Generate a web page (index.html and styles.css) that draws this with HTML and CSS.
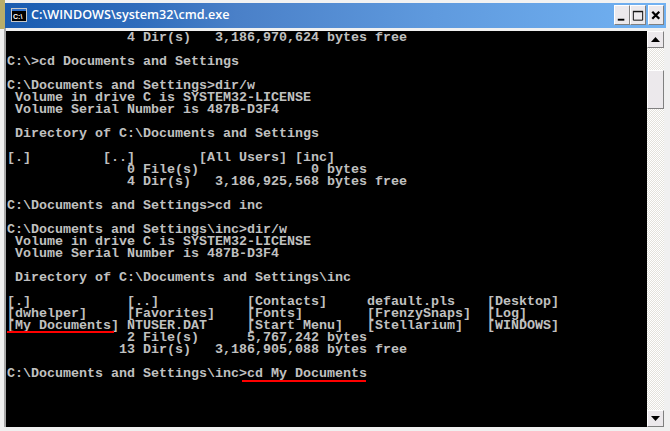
FILE: index.html
```html
<!DOCTYPE html>
<html lang="en">
<head>
<meta charset="utf-8">
<title>cmd.exe</title>
<link rel="stylesheet" href="styles.css">
</head>
<body>
<div class="window">
  <header class="titlebar">
    <svg class="app-icon" width="16" height="14" viewBox="0 0 16 14"><rect x="0.5" y="0.5" width="15" height="13" fill="#000" stroke="#c8c8c8"/><rect x="1" y="1" width="14" height="2" fill="#2f6fc8"/><text x="2" y="10.5" class="icon-text">C:\</text></svg>
    <span class="title">C:\WINDOWS\system32\cmd.exe</span>
    <div class="controls">
      <button class="ctl"><svg width="15" height="15" viewBox="0 0 15 15"><rect x="3" y="11" width="7" height="2" fill="#000"/></svg></button>
      <button class="ctl"><svg width="15" height="15" viewBox="0 0 15 15"><path d="M2.5 3.5h10v9h-10z M2 3h11" fill="none" stroke="#000"/></svg></button>
      <button class="ctl ctl-close"><svg width="15" height="15" viewBox="0 0 15 15"><path d="M3.5 3.5 L11 11 M11 3.5 L3.5 11" stroke="#000" stroke-width="2.4"/></svg></button>
    </div>
  </header>
  <div class="client">
    <main class="console">
<pre class="output">               4 Dir(s)   3,186,970,624 bytes free

C:\&gt;cd Documents and Settings

C:\Documents and Settings&gt;dir/w
 Volume in drive C is SYSTEM32-LICENSE
 Volume Serial Number is 487B-D3F4

 Directory of C:\Documents and Settings

[.]         [..]        [All Users] [inc]
               0 File(s)              0 bytes
               4 Dir(s)   3,186,925,568 bytes free

C:\Documents and Settings&gt;cd inc

C:\Documents and Settings\inc&gt;dir/w
 Volume in drive C is SYSTEM32-LICENSE
 Volume Serial Number is 487B-D3F4

 Directory of C:\Documents and Settings\inc

[.]            [..]           [Contacts]     default.pls    [Desktop]
[dwhelper]     [Favorites]    [Fonts]        [FrenzySnaps]  [Log]
[My Documents] NTUSER.DAT     [Start Menu]   [Stellarium]   [WINDOWS]
               2 File(s)      5,767,242 bytes
              13 Dir(s)   3,186,905,088 bytes free

C:\Documents and Settings\inc&gt;cd My Documents</pre>
      <div class="mark mark-folder"></div>
      <div class="mark mark-command"></div>
    </main>
    <aside class="scrollbar">
      <div class="sb-btn"><svg width="9" height="5" viewBox="0 0 9 5"><path d="M4.5 0 L9 5 H0 Z" fill="#000"/></svg></div>
      <div class="sb-track"><div class="sb-thumb"></div></div>
      <div class="sb-btn"><svg width="9" height="5" viewBox="0 0 9 5"><path d="M4.5 5 L9 0 H0 Z" fill="#000"/></svg></div>
    </aside>
  </div>
</div>
</body>
</html>
```
FILE: styles.css
```css
* { box-sizing: border-box; }
html, body { margin: 0; padding: 0; }
body { width: 670px; height: 431px; overflow: hidden; background: linear-gradient(#b8ad6a 0 29px, #f0f0f0 29px); }
.window { width: 670px; height: 431px; display: flex; flex-direction: column; padding-top: 3px; }
.titlebar {
  height: 25px; flex: none; display: flex; align-items: center;
  margin: 0 4px 0 5px; padding: 2px 2px 3px 6px;
  background: linear-gradient(90deg, #1a5cb0 0%, #2f6cbc 20%, #4a80c8 35%, #5f9ade 65%, #72b2f2 100%);
  box-shadow: 0 -3px 0 #f2f2f2, 4px -3px 0 #f2f2f2, 4px 0 0 #f2f2f2;
}
.app-icon { flex: none; margin-right: 4px; }
.icon-text { font: bold 7px "Liberation Sans", sans-serif; fill: #fff; }
.title { font: 600 12.6px/1 "Open Sans", "Liberation Sans", sans-serif; color: #fff; white-space: nowrap; }
.controls { margin-left: auto; display: flex; }
.ctl { width: 16px; height: 20px; padding: 0; border: 1px solid; border-color: #fff #808080 #808080 #fff; background: #ece9ec; display: flex; align-items: center; justify-content: center; }
.ctl-close { margin-left: 2px; }
.client { flex: 1; min-height: 0; display: flex; margin: 0 0 4px 4px; padding: 3px 6px 0 0; border-left: 2px solid #a8a8a8; background: #f0f0f0; border-bottom: 0; }
.console { position: relative; width: 641px; background: #000; overflow: hidden; padding: 1px 0 0 1px; }
.output { margin: 0; font: 700 13.333px/12px "Liberation Mono", monospace; color: #c0c0c0; white-space: pre; }
.mark { position: absolute; height: 2px; background: #f00; }
.mark-folder { left: 1px; top: 300px; width: 107px; }
.mark-command { left: 236px; top: 349px; width: 124px; }
.scrollbar { width: 17px; display: flex; flex-direction: column; }
.sb-btn { height: 17px; flex: none; background: #ece9ec; border: 1px solid; border-color: #fff #808080 #808080 #fff; display: flex; align-items: center; justify-content: center; }
.sb-track { flex: 1; padding-top: 22px; background: repeating-conic-gradient(#fff 0 25%, #e4e2dc 0 50%) 0 0 / 2px 2px; }
.sb-thumb { height: 39px; background: #ece9ec; border: 1px solid; border-color: #fff #808080 #808080 #fff; }
```
